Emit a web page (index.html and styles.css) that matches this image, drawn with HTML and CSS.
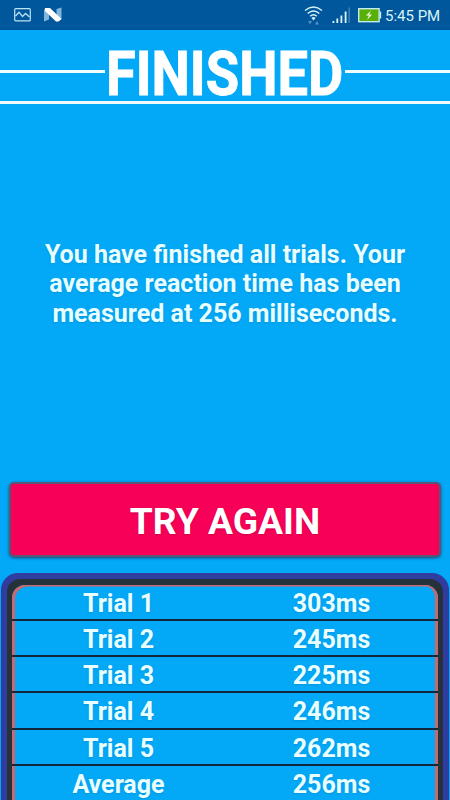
FILE: index.html
```html
<!DOCTYPE html>
<html lang="en">
<head>
<meta charset="utf-8">
<title>Finished</title>
<link rel="stylesheet" href="styles.css">
</head>
<body>
<div class="status">
  <svg class="status-left" width="50" height="16" viewBox="0 0 50 16">
    <rect x=".7" y="1.7" width="15.6" height="12.200" rx="1" fill="none" stroke="#b9e5f4" stroke-width="1.2"/>
    <path d="M1.5 9 5 5.2 8.5 9.5 11.5 6.5 15.5 10" fill="none" stroke="#b9e5f4" stroke-width="1.3"/>
    <path d="M30 3.5 35 1v11.5l-5 2zM42.500 2l5-1.500v11.500l-5 2.500z" fill="#80b5dc"/>
    <path d="M31 1h5l11.500 11-3 2.500h-2.500L30.500 3.500z" fill="#fff"/>
  </svg>
  <svg class="status-right" width="78" height="22" viewBox="0 0 78 22">
    <g fill="none" stroke="#d9f5fb" stroke-width="1.5">
      <path d="M1 6.500Q9.500 -.5 18 6.500M3.700 9.500Q9.500 4.500 15.300 9.500M6.200 12.300Q9.500 9.300 12.800 12.300"/>
    </g>
    <path d="M7.500 14Q9.500 12.100 11.500 14L9.500 16.500z" fill="#e5fafe"/>
    <path d="M4 17h4l-2 3.500zM11 20.500h4L13 17z" fill="#4f92c4"/>
    <path d="M28.500 17h1.800v2h-1.800zM32.400 14.500h1.800V19h-1.800zM36.500 11.500h1.800V19h-1.800zM40.700 7.500h1.800V19h-1.800z" fill="#d9f5fb"/>
    <path d="M44.500 3.500h1.300V19h-1.300z" fill="#4588bb"/>
    <rect x="54.700" y="4.700" width="20.400" height="13" fill="#57af08" stroke="#c5e9ef" stroke-width="1.400"/>
    <path d="M75.500 7.500h1.700v7h-1.700z" fill="#c5e9ef"/>
    <path d="m67 6.500-5 5h3l-2 4.500 5-5.500h-3z" fill="#f0ffe5"/>
  </svg>
  <span class="clock">5:45 PM</span>
</div>
<header class="header">
  <div class="heading">
    <span class="rule"></span>
    <h1><span class="condensed">FINISHED</span></h1>
    <span class="rule"></span>
  </div>
  <div class="underline"></div>
</header>
<p class="message">You have finished all trials. Your<br>average reaction time has been<br>measured at 256 milliseconds.</p>
<button class="retry">TRY AGAIN</button>
<div class="board">
  <div class="frame">
    <div class="rows">
      <div class="row"><span>Trial 1</span><span>303ms</span></div>
      <div class="row"><span>Trial 2</span><span>245ms</span></div>
      <div class="row"><span>Trial 3</span><span>225ms</span></div>
      <div class="row"><span>Trial 4</span><span>246ms</span></div>
      <div class="row"><span>Trial 5</span><span>262ms</span></div>
      <div class="row"><span>Average</span><span>256ms</span></div>
    </div>
  </div>
</div>
</body>
</html>
```
FILE: styles.css
```css
* { box-sizing: border-box; }
body {
  margin: 0;
  height: 800px;
  overflow: hidden;
  display: flex;
  flex-direction: column;
  background: #03a8f7;
  color: #effdff;
  font-family: Roboto, sans-serif;
}
.status {
  flex: none;
  height: 30px;
  display: flex;
  align-items: center;
  padding: 0 10px 0 14px;
  background: #01579b;
}
.status-right { margin-left: auto; }
.clock {
  width: 55px;
  margin-left: 3px;
  font-size: 15px;
  line-height: 30px;
  white-space: nowrap;
  color: #d9f3fb;
  padding-top: 1px;
}
.header { flex: none; height: 75px; }
.heading {
  height: 70px;
  display: flex;
  align-items: center;
}
.rule {
  flex: 1;
  height: 3px;
  margin-top: 13px;
  background: #effdff;
}
h1 {
  width: 240px;
  margin: 0;
  display: flex;
  justify-content: center;
  font-size: 62px;
  line-height: 70px;
  color: #fff;
  padding-top: 18px;
}
.condensed {
  transform: scaleX(.875);
  -webkit-text-stroke: .9px #fff;
}
.underline { height: 3px; margin-top: 1px; background: #effdff; }
.message {
  flex: none;
  height: 242px;
  margin: 135px 0 0;
  text-align: center;
  font-size: 25px;
  font-weight: 700;
  line-height: 29.4px;
  color: #e9feff;
  text-shadow: 0 1px 2px #0675ab50;
}
.retry {
  flex: none;
  height: 75px;
  margin: 0 9px;
  padding: 2px 0 0;
  border: 2px solid #5b5576;
  border-radius: 5px;
  background: #f70057;
  color: #fff;
  font: 700 37.2px Roboto, sans-serif;
  box-shadow: 0 1px 3px #164d6b;
  text-shadow: 0 1px 2px #7a003050;
}
.board {
  flex: none;
  height: 260px;
  margin: 16px 1px 0;
  padding: 6px 6px 0;
  border-radius: 17px 17px 0 0;
  background: #303da0;
}
.frame {
  height: 254px;
  padding: 6px 5px 0;
  border-radius: 13px 13px 0 0;
  background: #26323a;
}
.rows {
  border-radius: 13px 13px 0 0;
  overflow: hidden;
  background: #03a8f7;
  box-shadow: inset 3px 1.500px 0 #c7696f, inset -3px 0 0 #c7696f;
}
.row {
  height: 36.150px;
  display: grid;
  grid-template-columns: 1fr 1fr;
  border-bottom: 2px solid #14263a;
  font-size: 25px;
  font-weight: 700;
  line-height: 37px;
  text-align: center;
  color: #e9feff;
  text-shadow: 0 1px 2px #0675ab50;
}
```
